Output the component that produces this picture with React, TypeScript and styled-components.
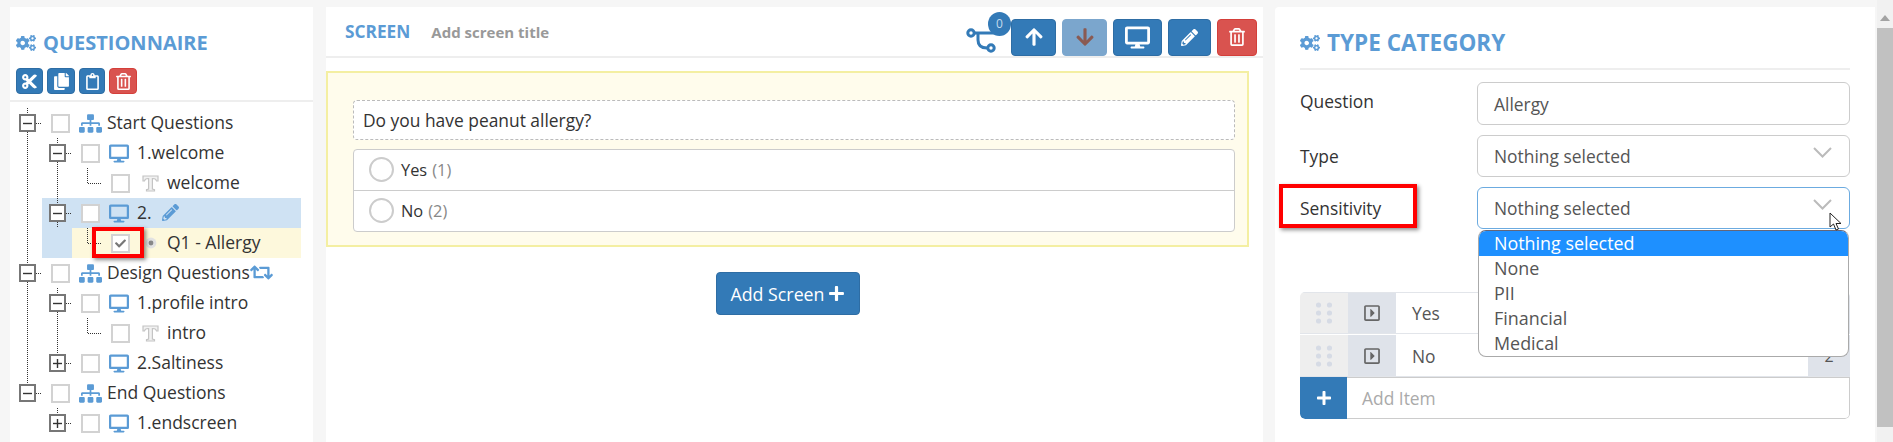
import React from "react";
import styled, { createGlobalStyle } from "styled-components";
import {
  FaCogs, FaCut, FaCopy, FaRegClipboard, FaRegTrashAlt, FaSitemap, FaDesktop, FaPencilAlt,
  FaRetweet, FaArrowUp, FaArrowDown, FaPlus, FaCheck, FaRegCaretSquareRight,
} from "react-icons/fa";

const Global = createGlobalStyle`
  html, body { margin: 0; padding: 0; height: 442px; overflow: hidden; background: #f6f6f6; }
  * { box-sizing: border-box; }
  body { font-family: "Open Sans", "Liberation Sans", sans-serif; color: #333; }
`;

const Page = styled.div`
  display: flex; height: 442px; padding: 7px 0 0 10px; overflow: hidden;
`;
const LeftPanel = styled.aside`
  width: 303px; margin-right: 13px; background: #fff; height: 460px; flex: none;
`;
const PanelHead = styled.div`
  padding: 26px 0 7px 6px; border-bottom: 2px solid #eee; height: 95px;
`;
const Title = styled.h3<{ $size: number }>`
  margin: 0; display: flex; align-items: center; gap: 7px; height: 20px;
  font-size: ${(p) => p.$size}px; font-weight: 700; color: #5b9bd5; line-height: 20px; white-space: nowrap;
`;
const BtnRow = styled.div`display: flex; gap: 4px; margin-top: 15px;`;
const MiniBtn = styled.button<{ $danger?: boolean; $w: number }>`
  width: ${(p) => p.$w}px; height: 26px; padding: 0; display: flex; align-items: center; justify-content: center;
  border-radius: 4px; color: #fff; font-size: 17px;
  background: ${(p) => (p.$danger ? "#d9534f" : "#337ab7")};
  border: 1px solid ${(p) => (p.$danger ? "#d43f3a" : "#2e6da4")};
`;
const Tree = styled.div`padding: 6px 12px 0 2px;`;
const Row = styled.div`display: flex; height: 30px; align-items: center; font-size: 17.5px;`;
const Tint = styled.div<{ $tone: "blue" | "yellow" }>`
  flex: 1; min-width: 0; height: 30px; display: flex; align-items: center;
  background: ${(p) => (p.$tone === "blue" ? "#cfe2f3" : "#fdf8dc")};
`;
const Cell = styled.svg`width: 30px; height: 30px; flex: none; display: block;`;
const Check = styled.span`
  width: 19px; height: 19px; margin-left: 9px; flex: none; background: #fff;
  border: 2px solid #d2d2d2; display: flex; align-items: center; justify-content: center;
  color: #777; font-size: 11px; margin-top: 1px;
`;
const NodeIcon = styled.span<{ $w: number; $gap: number }>`
  width: ${(p) => p.$w}px; margin-left: 9px; margin-right: ${(p) => p.$gap}px; flex: none;
  display: flex; align-items: center; justify-content: center; color: #5b9bd5; line-height: 0;
`;
const Label = styled.span`white-space: nowrap; color: #333; line-height: 28px; margin-bottom: 2px; display: flex; align-items: center;`;
const Inline = styled.span`color: #5b9bd5; display: inline-flex; margin-left: 10px; font-size: 17px;`;
const InlineTight = styled(Inline)`margin-left: 0; font-size: 23px;`;

const Middle = styled.main`
  width: 937px; margin-right: 12px; background: #fff; height: 460px; flex: none;
`;
const MidHead = styled.header`
  height: 51px; border-bottom: 2px solid #eee; display: flex; align-items: center; padding: 0 6px 0 19px;
`;
const ScreenTitle = styled.span`font-size: 17.3px; font-weight: 700; color: #5b9bd5;`;
const ScreenSub = styled.span`font-size: 15px; font-weight: 700; color: #999; margin-left: 21px;`;
const TopBtns = styled.div`margin-left: auto; display: flex; gap: 6px; align-items: center; padding-top: 11px; height: 48px;`;
const TopBtn = styled.button<{ $w: number; $danger?: boolean; $muted?: boolean }>`
  width: ${(p) => p.$w}px; height: 37px; padding: 0; display: flex; align-items: center; justify-content: center;
  border-radius: 4px; font-size: 20px;
  color: ${(p) => (p.$muted ? "#8a5a52" : "#fff")};
  background: ${(p) => (p.$danger ? "#d9534f" : p.$muted ? "#7ba6cd" : "#337ab7")};
  border: 1px solid ${(p) => (p.$danger ? "#d43f3a" : p.$muted ? "#7ba6cd" : "#2e6da4")};
`;
const Flow = styled.span`position: relative; width: 45px; height: 37px; display: block; margin-right: 3px; flex: none;`;
const FlowSvg = styled.svg`display: block;`;
const Badge = styled.span`
  position: absolute; right: -9px; top: -7px; width: 23px; height: 24px; border-radius: 50%;
  background: #337ab7; color: #c5dbec; font-size: 12px; display: flex; align-items: center; justify-content: center;
`;
const Stage = styled.section`
  width: 923px; height: 176px; margin-top: 13px; background: #fffcec; border: 2px solid #f4efa2; padding: 27px 12px 0 25px;
`;
const QuestionBox = styled.div`
  height: 40px; border: 1px dashed #bbb; border-radius: 4px; background: #fff; padding: 0 9px;
  font-size: 17.4px; line-height: 38px; color: #333;
`;
const Options = styled.div`
  margin-top: 9px; background: #fff; border: 1px solid #ccc; border-radius: 4px; height: 83px;
`;
const Option = styled.div`
  height: 40px; display: flex; align-items: center; padding: 0 0 1px 15px; font-size: 16.4px; color: #333;
  & + & { border-top: 1px solid #ccc; height: 41px; }
`;
const Radio = styled.span`
  width: 25px; height: 25px; border-radius: 50%; background: #fff; border: 2px solid #ccc; margin-right: 7px; flex: none;
`;
const Count = styled.span`color: #888; margin-left: 5px;`;
const AddWrap = styled.div`width: 923px; display: flex; justify-content: center; margin-top: 25px;`;
const AddBtn = styled.button`
  width: 144px; height: 43px; border-radius: 4px; background: #337ab7; border: 1px solid #2e6da4; color: #fff;
  font: 17.8px "Open Sans", sans-serif; display: flex; align-items: center; justify-content: center; gap: 3px; padding: 0;
`;

const Right = styled.aside`
  width: 600px; background: #fff; height: 460px; flex: none; padding: 0 25px; border-radius: 4px 0 0 0;
`;
const RightHead = styled.div`height: 63px; padding-top: 26px; border-bottom: 2px solid #eee;`;
const FieldRow = styled.div<{ $h: number; $top: number }>`
  display: flex; align-items: center; height: ${(p) => p.$h}px; margin-top: ${(p) => p.$top}px;
`;
const FieldLabel = styled.label<{ $shift?: number }>`
  width: 177px; flex: none; font-size: 17.4px; color: #333; margin-top: ${(p) => p.$shift ?? 0}px;
`;
const Control = styled.div<{ $focus?: boolean }>`
  flex: 1; height: 100%; border: 1px solid ${(p) => (p.$focus ? "#6cabe0" : "#ccc")}; border-radius: 6px; background: #fff;
  padding: 0 17px 0 16px; display: flex; align-items: center; justify-content: space-between; font-size: 17.4px; color: #555;
  position: relative;
`;
const CaretSvg = styled.svg`display: block; margin-top: -8px;`;
const DropMenu = styled.ul`
  position: absolute; left: 0; right: 0; top: 42px; height: 127px; margin: 0; padding: 0; list-style: none; z-index: 3;
  background: #fff; border: 1px solid #aaa; border-top-color: #667; border-radius: 8px; overflow: hidden; font-size: 17.9px;
  &::after {
    content: ""; position: absolute; right: -1px; top: 26px; width: 1px; height: 25px; background: #5c7a99;
  }
`;
const DropItem = styled.li<{ $active?: boolean }>`
  height: 25px; line-height: 25px; padding-left: 15px;
  background: ${(p) => (p.$active ? "#1e90ff" : "transparent")}; color: ${(p) => (p.$active ? "#fff" : "#555")};
`;
const Items = styled.div`margin-top: 63px; border-radius: 5px; overflow: hidden;`;
const Item = styled.div`display: flex; height: 42px; margin-bottom: 1px; border-bottom: 1px solid #e2e5ea; border-top: 1px solid #e2e5ea;
  & + & { border-top: 0; }`;
const Handle = styled.span`
  width: 48px; background: #eee; display: flex; align-items: center; justify-content: center;
`;
const Play = styled.span`
  width: 48px; background: #dfe3ea; display: flex; align-items: center; justify-content: center; color: #666; font-size: 18px;
`;
const ItemText = styled.span`flex: 1; padding-left: 16px; font-size: 17.4px; color: #555; display: flex; align-items: center;`;
const ItemNum = styled.span`
  width: 42px; background: #dfe3ea; display: flex; align-items: center; justify-content: center; font-size: 16px; color: #555;
`;
const AddRow = styled.div`display: flex; height: 42px; margin-top: -1px;`;
const AddIcon = styled.span`
  width: 47px; background: #337ab7; color: #fff; display: flex; align-items: center; justify-content: center;
  font-size: 16px; border-radius: 0 0 0 5px;
`;
const AddInput = styled.span`
  flex: 1; border: 1px solid #ccc; border-left: 0; border-radius: 0 0 5px 0; padding-left: 15px; font-size: 17.4px; color: #aaa;
  display: flex; align-items: center;
`;
const Callout = styled.span<{ $l: number; $t: number; $w: number; $h: number; $shadow?: boolean }>`
  position: absolute; left: ${(p) => p.$l}px; top: ${(p) => p.$t}px; width: ${(p) => p.$w}px; height: ${(p) => p.$h}px;
  border: 4px solid #f00; z-index: 5; pointer-events: none;
  box-shadow: ${(p) => (p.$shadow ? "2px 2px 4px rgba(0,0,0,.45)" : "none")};
`;
const Pointer = styled.svg`position: absolute; left: 1829px; top: 212px; z-index: 6;`;
const Scroll = styled.div`
  position: absolute; right: 0; top: 0; width: 16px; height: 442px; background: #f1f1f1; z-index: 4;
  display: flex; flex-direction: column; align-items: center;
`;
const Arrow = styled.span`
  width: 0; height: 0; margin: 15px 0 7px; border-left: 5px solid transparent; border-right: 5px solid transparent; border-bottom: 6px solid #a3a3a3;
`;
const Thumb = styled.span`width: 16px; height: 399px; background: #c1c1c1;`;

type Kind = "line" | "open" | "elbow" | "stubOpen" | "stubClosed" | "rootOpen" | "rootLast";
const dot = { stroke: "#333", strokeWidth: 1, strokeDasharray: "1 1", fill: "none", shapeRendering: "crispEdges" as const };
const Gutter = ({ k }: { k: Kind }) => (
  <Cell viewBox="0 0 30 30">
    {k === "line" && <path d="M15.5 0V30" {...dot} />}
    {k === "elbow" && <path d="M15.5 0V15.5H31" {...dot} />}
    {k !== "line" && k !== "elbow" && (
      <>
        <path d={k === "rootOpen" || k === "stubOpen" ? "M15.5 0V6M15.5 24V30" : "M15.5 0V6"} {...dot} />
        <path d="M24 15.5H32" {...dot} />
        <rect x="8" y="7" width="15" height="16" fill="#fff" stroke="#777" strokeWidth="2" />
        <path d="M11 15.5H20" stroke="#333" strokeWidth="1.4" />
        {k === "stubClosed" && <path d="M15.5 11V20" stroke="#333" strokeWidth="1.4" />}
      </>
    )}
  </Cell>
);

const TextIcon = () => (
  <svg width="17" height="17" viewBox="0 0 17 17">
    <path d="M1 1H16V6H14.5Q14 3.5 11 3.5H10.4V14L12.5 14.6V16H4.5V14.6L6.6 14V3.5H6Q3 3.5 2.5 6H1Z" fill="#f1f1f1" stroke="#c4c4c4" strokeWidth="1.2" />
  </svg>
);

const DragDots = () => (
  <svg width="16" height="22" viewBox="0 0 16 22">
    {[3, 11, 19].map((y) => [2, 13].map((x) => <circle key={`${x}${y}`} cx={x + 0.5} cy={y} r="2.6" fill="#d6dbe5" />))}
  </svg>
);

const FlowIcon = () => (
  <FlowSvg width="45" height="37" viewBox="0 0 45 37">
    <g fill="none" stroke="#337ab7" strokeWidth="3">
      <circle cx="14" cy="14" r="3.2" />
      <circle cx="34" cy="29" r="3.2" />
      <path d="M17.5 14H42" />
      <path d="M21 14V21Q21 29 30 29" />
    </g>
  </FlowSvg>
);

const Chevron = () => (
  <CaretSvg width="19" height="11" viewBox="0 0 19 11">
    <path d="M1 1L9.5 9.5L18 1" fill="none" stroke="#bbb" strokeWidth="2" />
  </CaretSvg>
);

const RadioIcon = () => (
  <svg width="12" height="12" viewBox="0 0 12 12">
    <circle cx="6" cy="6" r="5.4" fill="#e2e2e2" />
    <circle cx="6" cy="6" r="2.4" fill="#888" />
  </svg>
);

const Overlays = () => (
  <>
    <Callout $l={92} $t={227} $w={52} $h={31} $shadow />
    <Callout $l={1279} $t={184} $w={138} $h={44} $shadow />
    <Pointer width="14" height="20" viewBox="0 0 14 20">
      <path d="M1 1V15L4.5 12L7 18L9.5 17L7 11.5H12Z" fill="#fff" stroke="#222" strokeWidth="1" />
    </Pointer>
    <Scroll><Arrow /><Thumb /></Scroll>
  </>
);

export default function App() {
  return (
    <>
      <Global />
      <Page>
        <LeftPanel>
          <PanelHead>
            <Title $size={20}><FaCogs size={20} />QUESTIONNAIRE</Title>
            <BtnRow>
              <MiniBtn $w={27}><FaCut /></MiniBtn>
              <MiniBtn $w={28}><FaCopy /></MiniBtn>
              <MiniBtn $w={26}><FaRegClipboard /></MiniBtn>
              <MiniBtn $w={28} $danger><FaRegTrashAlt /></MiniBtn>
            </BtnRow>
          </PanelHead>
          <Tree>
            <Row><Gutter k="rootOpen" /><Check /><NodeIcon $w={23} $gap={5}><FaSitemap size={23} /></NodeIcon><Label>Start Questions</Label></Row>
            <Row><Gutter k="line" /><Gutter k="stubOpen" /><Check /><NodeIcon $w={20} $gap={8}><FaDesktop size={21} /></NodeIcon><Label>1.welcome</Label></Row>
            <Row><Gutter k="line" /><Gutter k="line" /><Gutter k="elbow" /><Check /><NodeIcon $w={22} $gap={6}><TextIcon /></NodeIcon><Label>welcome</Label></Row>
            <Row><Gutter k="line" /><Tint $tone="blue"><Gutter k="stubOpen" /><Check /><NodeIcon $w={20} $gap={8}><FaDesktop size={21} /></NodeIcon><Label>2.<Inline><FaPencilAlt /></Inline></Label></Tint></Row>
            <Row><Gutter k="line" /><Tint $tone="blue"><Cell viewBox="0 0 30 30" /><Tint $tone="yellow"><Gutter k="elbow" /><Check><FaCheck /></Check><NodeIcon $w={24} $gap={4}><RadioIcon /></NodeIcon><Label>Q1 - Allergy</Label></Tint></Tint></Row>
            <Row><Gutter k="rootOpen" /><Check /><NodeIcon $w={23} $gap={5}><FaSitemap size={23} /></NodeIcon><Label>Design Questions<InlineTight><FaRetweet /></InlineTight></Label></Row>
            <Row><Gutter k="line" /><Gutter k="stubOpen" /><Check /><NodeIcon $w={20} $gap={8}><FaDesktop size={21} /></NodeIcon><Label>1.profile intro</Label></Row>
            <Row><Gutter k="line" /><Gutter k="line" /><Gutter k="elbow" /><Check /><NodeIcon $w={22} $gap={6}><TextIcon /></NodeIcon><Label>intro</Label></Row>
            <Row><Gutter k="line" /><Gutter k="stubClosed" /><Check /><NodeIcon $w={20} $gap={8}><FaDesktop size={21} /></NodeIcon><Label>2.Saltiness</Label></Row>
            <Row><Gutter k="rootLast" /><Check /><NodeIcon $w={23} $gap={5}><FaSitemap size={23} /></NodeIcon><Label>End Questions</Label></Row>
            <Row><Cell viewBox="0 0 30 30" /><Gutter k="stubClosed" /><Check /><NodeIcon $w={20} $gap={8}><FaDesktop size={21} /></NodeIcon><Label>1.endscreen</Label></Row>
          </Tree>
        </LeftPanel>
        <Middle>
          <MidHead>
            <ScreenTitle>SCREEN</ScreenTitle>
            <ScreenSub>Add screen title</ScreenSub>
            <TopBtns>
              <Flow><FlowIcon /><Badge>0</Badge></Flow>
              <TopBtn $w={45}><FaArrowUp /></TopBtn>
              <TopBtn $w={45} $muted><FaArrowDown /></TopBtn>
              <TopBtn $w={49}><FaDesktop size={25} /></TopBtn>
              <TopBtn $w={43}><FaPencilAlt size={17} /></TopBtn>
              <TopBtn $w={40} $danger><FaRegTrashAlt size={18} /></TopBtn>
            </TopBtns>
          </MidHead>
          <Stage>
            <QuestionBox>Do you have peanut allergy?</QuestionBox>
            <Options>
              <Option><Radio />Yes<Count>(1)</Count></Option>
              <Option><Radio />No<Count>(2)</Count></Option>
            </Options>
          </Stage>
          <AddWrap><AddBtn>Add Screen<FaPlus size={17} /></AddBtn></AddWrap>
        </Middle>
        <Right>
          <RightHead><Title $size={22.5}><FaCogs size={20} />TYPE CATEGORY</Title></RightHead>
          <FieldRow $h={43} $top={12}><FieldLabel $shift={-6}>Question</FieldLabel><Control>Allergy</Control></FieldRow>
          <FieldRow $h={42} $top={10}><FieldLabel>Type</FieldLabel><Control>Nothing selected<Chevron /></Control></FieldRow>
          <FieldRow $h={42} $top={10}>
            <FieldLabel>Sensitivity</FieldLabel>
            <Control $focus>Nothing selected<Chevron />
              <DropMenu>
                <DropItem $active>Nothing selected</DropItem>
                <DropItem>None</DropItem>
                <DropItem>PII</DropItem>
                <DropItem>Financial</DropItem>
                <DropItem>Medical</DropItem>
              </DropMenu>
            </Control>
          </FieldRow>
          <Items>
            <Item><Handle><DragDots /></Handle><Play><FaRegCaretSquareRight /></Play><ItemText>Yes</ItemText><ItemNum>1</ItemNum></Item>
            <Item><Handle><DragDots /></Handle><Play><FaRegCaretSquareRight /></Play><ItemText>No</ItemText><ItemNum>2</ItemNum></Item>
            <AddRow><AddIcon><FaPlus /></AddIcon><AddInput>Add Item</AddInput></AddRow>
          </Items>
        </Right>
      </Page>
      <Overlays />
    </>
  );
}
